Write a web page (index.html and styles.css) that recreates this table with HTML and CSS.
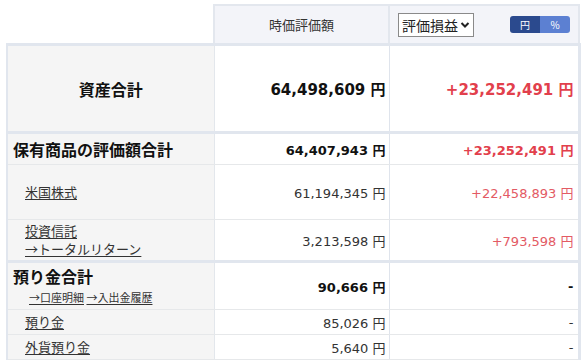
FILE: index.html
```html
<!DOCTYPE html>
<html lang="ja">
<head>
<meta charset="utf-8">
<link rel="stylesheet" href="styles.css">
</head>
<body>
<table class="assets">
  <colgroup>
    <col class="c1"><col class="c2"><col class="c3">
  </colgroup>
  <thead>
    <tr class="head">
      <th class="blank"></th>
      <th class="hcell">時価評価額</th>
      <th class="hcell hsel">
        <div class="hbar">
          <span class="select">評価損益<svg width="10" height="8" viewBox="0 0 10 8"><path d="M1.5 2 L5 5.5 L8.5 2" fill="none" stroke="#222" stroke-width="2"/></svg></span>
          <span class="toggle"><span class="t-on">円</span><span class="t-off">%</span></span>
        </div>
      </th>
    </tr>
  </thead>
  <tbody class="grp">
    <tr class="total">
      <th class="lbl center">資産合計</th>
      <td class="num big">64,498,609 円</td>
      <td class="num big red">+23,252,491 円</td>
    </tr>
  </tbody>
  <tbody class="grp">
    <tr class="sum">
      <th class="lbl bold">保有商品の評価額合計</th>
      <td class="num mid">64,407,943 円</td>
      <td class="num mid red">+23,252,491 円</td>
    </tr>
    <tr class="r-us">
      <th class="lbl sub"><a href="#">米国株式</a></th>
      <td class="num">61,194,345 円</td>
      <td class="num pink">+22,458,893 円</td>
    </tr>
    <tr class="r-fund">
      <th class="lbl sub"><a href="#">投資信託</a><br><a href="#">→トータルリターン</a></th>
      <td class="num">3,213,598 円</td>
      <td class="num pink">+793,598 円</td>
    </tr>
  </tbody>
  <tbody class="grp">
    <tr class="dep">
      <th class="lbl bold">預り金合計<div class="links"><a href="#">→口座明細</a> <a href="#">→入出金履歴</a></div></th>
      <td class="num mid">90,666 円</td>
      <td class="num mid">-</td>
    </tr>
    <tr class="small">
      <th class="lbl sub"><a href="#">預り金</a></th>
      <td class="num">85,026 円</td>
      <td class="num">-</td>
    </tr>
    <tr class="small">
      <th class="lbl sub"><a href="#">外貨預り金</a></th>
      <td class="num">5,640 円</td>
      <td class="num">-</td>
    </tr>
  </tbody>
</table>
</body>
</html>
```

FILE: styles.css
```css
html, body {
  margin: 0;
  padding: 0;
  background: #fff;
}
body {
  padding: 4px 0 0 6px;
  font-family: "DejaVu Sans", "Noto Sans CJK JP", sans-serif;
  color: #333;
}
.assets {
  border-collapse: collapse;
  table-layout: fixed;
  width: 572px;
}
.c1 { width: 207px; }
.c2 { width: 175px; }
.c3 { width: 190px; }

.head th {
  height: 37px;
  padding: 0;
  font-weight: normal;
}
.blank {
  background: #fff;
  border-bottom: 2px solid #e1e6ee;
}
.hcell {
  background: #f3f4f9;
  border-top: 2px solid #e3e7ee;
  border-left: 2px solid #e3e7ee;
  border-right: 2px solid #e3e7ee;
  border-bottom: 1px solid #e3e7ee;
  font-family: "Noto Sans CJK JP", sans-serif;
  font-size: 13px;
  color: #333;
}
.hsel {
  border-left: 1px solid #dfe4ec;
}
.hbar {
  display: flex;
  align-items: center;
  justify-content: space-between;
  padding: 0 8px 0 8px;
}
.select {
  display: inline-flex;
  align-items: center;
  gap: 2px;
  height: 22px;
  padding: 0 3px 0 3px;
  border: 1px solid #8a8a8a;
  background: #fff;
  font-family: "Noto Sans CJK JP", sans-serif;
  font-size: 14px;
  color: #222;
}
.toggle {
  display: inline-flex;
  height: 17px;
  border-radius: 3px;
  overflow: hidden;
  font-size: 10px;
  color: #fff;
  font-family: "Noto Sans CJK JP", sans-serif;
}
.toggle span {
  width: 30px;
  display: flex;
  align-items: center;
  justify-content: center;
}
.t-on { background: #2b4a8e; }
.t-off { background: #5c80d2; }

.grp {
  border-top: 3px solid #e1e6ee;
}
.assets td, .assets tbody th {
  border-bottom: 1px solid #e6e8ea;
  padding: 0;
}
.assets tbody th {
  border-left: 2px solid #e1e6ee;
  background: #f5f5f5;
  text-align: left;
  font-weight: normal;
  font-family: "Noto Sans CJK JP", sans-serif;
}
.assets td {
  background: #fff;
  border-left: 1px solid #e3e7ec;
}
.assets td:last-child {
  border-right: 3px solid #e1e6ee;
  border-left: 1px solid #dfe4ec;
}

.total { height: 88px; }
.sum { height: 32px; }
.r-us { height: 55px; }
.r-fund { height: 42px; }
.dep { height: 48px; }
.small { height: 25px; }

.lbl.center {
  text-align: center;
  font-size: 16px;
  font-weight: bold;
  color: #111;
}
.lbl.bold {
  font-size: 16px;
  font-weight: bold;
  color: #111;
  padding-left: 5px;
  line-height: 22px;
}
.lbl.sub {
  padding-left: 17px;
  font-size: 13px;
  line-height: 18px;
}
.lbl a {
  color: #333;
  text-decoration: underline;
  text-underline-offset: 2px;
}
.links {
  font-size: 11px;
  font-weight: normal;
  padding-left: 16px;
  line-height: 20px;
}

.num {
  text-align: right;
  font-size: 13px;
  color: #333;
  padding-right: 3px !important;
  white-space: nowrap;
}
.assets td.num:last-child {
  padding-right: 4px !important;
}
.num.big {
  font-size: 15px;
  font-weight: bold;
  color: #111;
}
.num.mid {
  font-weight: bold;
  color: #111;
}
.num.red { color: #e2404c; }
.num.pink { color: #e35a64; }
```
